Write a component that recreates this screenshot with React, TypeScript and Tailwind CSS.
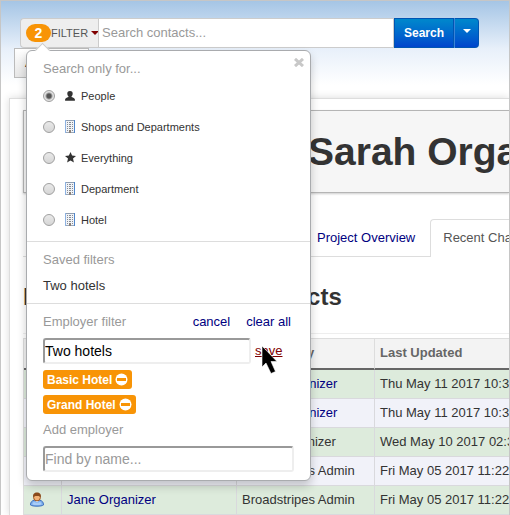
import React from "react";

function Building() {
  return (
    <svg width="10" height="13" viewBox="0 0 10 13" aria-hidden="true">
      <rect x="0" y="0" width="10" height="13" fill="#f1f3f6" />
      <path d="M0 0h10v1H0z" fill="#8f9db0" />
      <path d="M0 0h1v13H0z" fill="#8db2e2" />
      <path d="M9 0h1v13H9z" fill="#4f86cc" />
      <path
        d="M2 2h1v1H2zM4 2h2v1H4zM7 2h1v1H7zM2 4h1v1H2zM4 4h2v1H4zM7 4h1v1H7zM2 6h1v1H2zM4 6h2v1H4zM7 6h1v1H7zM2 8h1v1H2zM4 8h2v1H4zM7 8h1v1H7zM2 10h1v1H2zM7 10h1v1H7z"
        fill="#868b95"
      />
      <path d="M4 10h2v3H4z" fill="#8a8078" />
      <path d="M1 12h3v1H1zM6 12h3v1H6z" fill="#9aa7b8" />
    </svg>
  );
}

function Person() {
  return (
    <svg width="10" height="10" viewBox="0 0 10 10" fill="#333" aria-hidden="true">
      <path d="M5 0C6.900 0 7.900 1.100 7.700 2.800 7.600 4.200 7 5 6.500 5.500v.4c.6.5 3.200.9 3.400 2.300V9.700H.1V8.200C.3 6.800 2.900 6.400 3.500 5.900V5.500C3 5 2.400 4.200 2.300 2.800 2.100 1.100 3.100 0 5 0z" />
    </svg>
  );
}

function Star() {
  return (
    <svg width="11" height="11" viewBox="0 0 11 11" fill="#333" aria-hidden="true">
      <path d="M5.500 0l1.600 3.500 3.900.4-3 2.600.9 3.900-3.400-2.000L2.100 10.400l.9-3.900L0 3.900l3.900-.4z" />
    </svg>
  );
}

function Contact() {
  return (
    <svg width="16" height="16" viewBox="0 0 16 16" aria-hidden="true">
      <path d="M1.500 13c0-3 1.500-4.500 4-4.800h5c2.500.3 4 1.800 4 4.800-2 1.600-11 1.600-13 0z" fill="#7eb0ee" stroke="#3f70bd" />
      <path d="M3.500 12.500c0-1.500.6-2.200 1.600-2.600l2.900 1 2.900-1c1 .4 1.600 1.100 1.600 2.600-2 .8-7 .8-9 0z" fill="#a9cdf8" />
      <path d="M6 8h4l-2 2.500z" fill="#fff" />
      <ellipse cx="8" cy="5.500" rx="3.400" ry="3.400" fill="#f3b277" stroke="#9a5522" />
      <path d="M4.100 5.500C3.700 2 5.300.6 8 .6S12.300 2 11.900 5.500C11.200 4.200 10 4 8 4S4.800 4.200 4.100 5.500z" fill="#8b4a1c" />
    </svg>
  );
}

function Remove() {
  return (
    <svg width="13" height="13" viewBox="0 0 13 13" aria-hidden="true">
      <circle cx="6.500" cy="6.500" r="6" fill="#fff" />
      <path d="M2 5h9v3H2z" fill="#f89406" />
    </svg>
  );
}

const kinds = [
  { name: "People", icon: <Person /> },
  { name: "Shops and Departments", icon: <Building /> },
  { name: "Everything", icon: <Star /> },
  { name: "Department", icon: <Building /> },
  { name: "Hotel", icon: <Building /> },
];

const rows = [
  { name: "Basic Hotel", by: "Sarah Organizer", link: true, date: "Thu May 11 2017 10:38:12" },
  { name: "Grand Hotel", by: "Sarah Organizer", link: true, date: "Thu May 11 2017 10:36:40" },
  { name: "Sarah Organizer", by: "David Organizer", link: false, date: "Wed May 10 2017 02:31:05" },
  { name: "David Organizer", by: "Broadstripes Admin", link: false, date: "Fri May 05 2017 11:22:51" },
  { name: "Jane Organizer", by: "Broadstripes Admin", link: false, date: "Fri May 05 2017 11:22:18" },
];

const field =
  "block h-[26px] rounded-[3px] border-2 border-t-[#999] border-l-[#999] border-r-[#eee] border-b-[#eee] bg-white p-0 text-sm text-black outline-none placeholder:text-[#999]";

function FilterPanel() {
  return (
    <div className="absolute top-8 left-[6px] z-10 w-[285px] rounded-md border border-[#a9abae] bg-white pb-2 text-[#999] shadow-[0_5px_10px_rgba(0,0,0,0.2)]">
      <span className="absolute -top-[6px] left-[10px] size-[11px] rotate-45 border-t border-l border-[#ccc] bg-white" />
      <button type="button" aria-label="Close" className="absolute top-[7px] right-[6px]">
        <svg width="10" height="9" viewBox="0 0 10 9" stroke="#c8c8c8" strokeWidth="3">
          <path d="M1 .9l8 7.200M9 .9L1 8.100" />
        </svg>
      </button>

      <fieldset className="px-4 pt-[7px] pb-[6px]">
        <legend className="contents">
          <span className="block leading-[22px]">Search only for...</span>
        </legend>
        {kinds.map((kind, i) => (
          <label key={kind.name} className="flex h-[31px] items-center text-[11px] leading-4 text-[#333]">
            <input
              type="radio"
              name="kind"
              defaultChecked={i === 0}
              className="size-3 shrink-0 appearance-none rounded-full border border-[#a0a0a0] bg-linear-to-b from-[#e9e9e9] to-[#d6d6d6] checked:bg-[radial-gradient(circle,#555_0_2px,#e2e2e2_4px)]"
            />
            <span className="ml-[10px] flex w-4 items-center">{kind.icon}</span>
            {kind.name}
          </label>
        ))}
      </fieldset>

      <section className="border-t border-[#ddd] px-4 pt-[7px] pb-[6px] leading-[22px]">
        <h3>Saved filters</h3>
        <button type="button" className="mt-1 block text-[#333]">Two hotels</button>
      </section>

      <section className="border-t border-[#ddd] px-4 pt-[7px] leading-[22px]">
        <div className="flex">
          <h3 className="flex-1">Employer filter</h3>
          <div className="flex gap-4 pr-[3px] text-[#000080]">
            <button type="button">cancel</button>
            <button type="button">clear all</button>
          </div>
        </div>
        <div className="mt-[5px] flex items-center gap-1">
          <input aria-label="Filter name" defaultValue="Two hotels" className={field + " w-[208px]"} />
          <button type="button" className="relative text-[#800000] underline">
            save
            <svg className="absolute top-[6px] left-[6px]" width="18" height="28" viewBox="0 0 18 28" aria-hidden="true">
              <path d="M1 0v21l4-4 5 10.500 4.500-2-4.500-10H16z" fill="#000" stroke="#fff" strokeWidth=".6" />
            </svg>
          </button>
        </div>
        <div className="mt-[6px] flex flex-col items-start gap-[6px]">
          {["Basic Hotel", "Grand Hotel"].map((name) => (
            <span key={name} className="flex h-[19px] items-center gap-[3px] rounded-[3px] bg-[#f89406] px-1 text-xs font-bold text-white">
              {name}
              <button type="button" aria-label={"Remove " + name}><Remove /></button>
            </span>
          ))}
        </div>
        <label className="mt-[5px] block">
          <span className="block pb-[5px]">Add employer</span>
          <input placeholder="Find by name..." className={field + " w-full"} />
        </label>
      </section>
    </div>
  );
}

export default function App() {
  return (
    <div className="min-h-screen overflow-hidden border border-[#c6c6c6] bg-white bg-linear-to-b from-[#a5c5e5] via-[#e8f0fa] via-[48px] to-white to-[84px] font-['Liberation_Sans',Arial,sans-serif] text-[13px] leading-5 text-[#333]">
      <header className="h-[97px] pt-[17px]">
        <form className="mr-[30px] ml-[19px] flex h-[30px]" onSubmit={(e) => e.preventDefault()}>
          <div className="relative">
            <button type="button" className="flex h-[30px] w-[78px] items-center overflow-hidden rounded-l border border-r-0 border-[#ccc] bg-[#eee] pl-[5px] text-[11px] text-[#555]">
              <span className="flex h-[18px] w-[25px] shrink-0 items-center justify-center rounded-full bg-[#f89406] text-sm font-bold text-white">2</span>
              FILTER
              <svg className="ml-[3px] shrink-0" width="8" height="4" viewBox="0 0 8 4" aria-hidden="true">
                <path d="M0 0h8L4 4z" fill="#800000" />
              </svg>
            </button>
            <FilterPanel />
          </div>
          <input aria-label="Search contacts" placeholder="Search contacts..." className="min-w-0 flex-1 border border-[#ccc] bg-white px-[3px] outline-none placeholder:text-[#999]" />
          <button type="submit" className="w-[60px] border border-[#0055b3] bg-linear-to-b from-[#0088cc] to-[#0044cc] text-xs font-bold text-white">Search</button>
          <button type="button" aria-label="Search options" className="flex w-[25px] items-center justify-center rounded-r border border-l-[#3a83d6] border-[#0055b3] bg-linear-to-b from-[#0088cc] to-[#0044cc] pb-1">
            <svg width="8" height="4" viewBox="0 0 8 4" aria-hidden="true"><path d="M0 0h8L4 4z" fill="#fff" /></svg>
          </button>
        </form>
        <button type="button" className="ml-[13px] block h-[30px] w-[75px] border border-[#bbb] bg-linear-to-b from-white to-[#e6e6e6] pl-[10px] text-left">Actions</button>
      </header>

      <main className="ml-2 border-t border-l border-[#ddd] bg-white pt-[11px] pl-[13px] whitespace-nowrap shadow-[0_0_8px_rgba(0,0,0,0.15)]">
        <div className="border border-r-0 border-[#b5b5b5] bg-[#f6f6f6] pl-[284px] shadow-[0_1px_2px_rgba(0,0,0,0.2)]">
          <h1 className="text-[39px] leading-[81px] font-bold">Sarah Organizer</h1>
        </div>

        <nav className="mt-[26px] flex border-b border-[#ddd] pl-[281px]">
          <a href="#overview" className="mr-[2px] px-[13px] pt-[9px] pb-2 text-[#000080]">Project Overview</a>
          <a href="#changes" className="-mb-px rounded-t border border-b-0 border-[#ddd] bg-white px-3 pt-2 pb-[9px] text-[#555]">Recent Changes</a>
        </nav>

        <h2 className="mt-5 border-b border-[#eee] pb-4 text-2xl leading-10 font-bold">Recently Changed Contacts</h2>

        <table className="mt-1 w-full min-w-[560px] table-fixed border-separate border-spacing-0 border-l border-[#ddd]">
          <thead>
            <tr className="h-8 text-left text-[#666]">
              {["", "Name", "Updated By", "Last Updated"].map((title, i) => (
                <th key={i} className={"border-t border-r border-b-2 border-t-[#ddd] border-r-[#ddd] border-b-[#666] bg-[#f3f3f3] px-[5px] pt-0 pb-[2px] " + ["w-[38px]", "w-[175px]", "w-[138px]", ""][i]}>
                  {title}
                </th>
              ))}
            </tr>
          </thead>
          <tbody>
            {rows.map((row) => (
              <tr key={row.name} className="h-[29px] odd:bg-[#ddebdc] even:bg-[#f1f2f9] *:border-r *:border-b *:border-[#d9d9dd] *:px-[5px] *:py-0">
                <td><Contact /></td>
                <td><a href="#contact" className="text-[#000080]">{row.name}</a></td>
                <td>{row.link ? <a href="#user" className="text-[#000080]">{row.by}</a> : row.by}</td>
                <td>{row.date}</td>
              </tr>
            ))}
          </tbody>
        </table>
      </main>
    </div>
  );
}
